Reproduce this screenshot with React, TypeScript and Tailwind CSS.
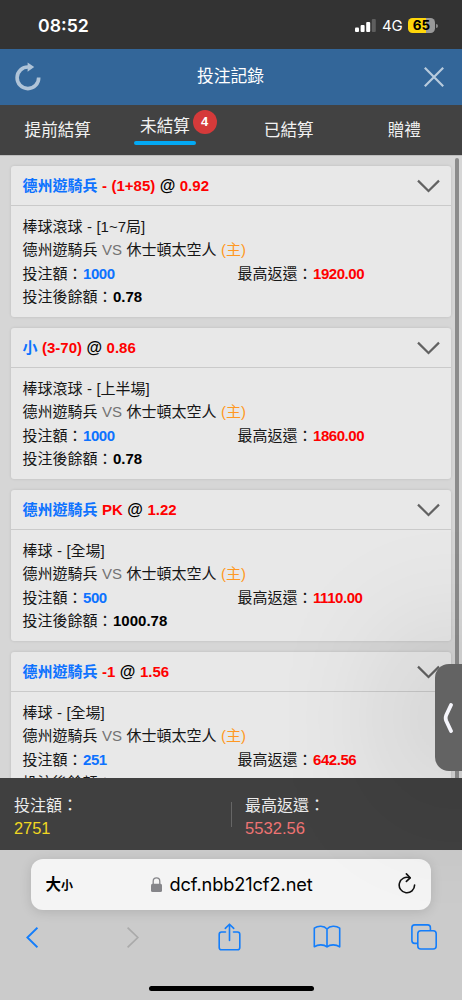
type Bet = {
  pick: string;
  line: string;
  odds: string;
  game: string;
  stake: string;
  payout: string;
  balance: string;
};

const bets: Bet[] = [
  { pick: "德州遊騎兵", line: "- (1+85)", odds: "0.92", game: "棒球滾球 - [1~7局]", stake: "1000", payout: "1920.00", balance: "0.78" },
  { pick: "小", line: "(3-70)", odds: "0.86", game: "棒球滾球 - [上半場]", stake: "1000", payout: "1860.00", balance: "0.78" },
  { pick: "德州遊騎兵", line: "PK", odds: "1.22", game: "棒球 - [全場]", stake: "500", payout: "1110.00", balance: "1000.78" },
  { pick: "德州遊騎兵", line: "-1", odds: "1.56", game: "棒球 - [全場]", stake: "251", payout: "642.56", balance: "1500.78" },
];

function StatusBar() {
  return (
    <div className="flex h-[49px] shrink-0 items-center justify-between bg-[#333333] pt-[2px] pr-[24px] pl-[38px] font-['Inter',sans-serif] text-white">
      <span className="text-[17.7px] leading-none font-semibold">08:52</span>
      <div className="flex items-center">
        <svg width="21" height="13" viewBox="0 0 21 13" fill="#fff">
          <rect x="0" y="8.5" width="4" height="4.5" rx="1" />
          <rect x="5.6" y="6" width="4" height="7" rx="1" />
          <rect x="11.2" y="3" width="4" height="10" rx="1" />
          <rect x="16.8" y="0" width="4" height="13" rx="1" fill="#5e5e5e" />
        </svg>
        <span className="ml-[6px] w-[20px] text-[15px] leading-none tracking-[-0.3px]">4G</span>
        <div className="ml-[6px] flex h-[15px] w-[27px] items-center justify-center rounded-[4.5px] bg-linear-to-r from-[#ffd60a] from-65% to-[#999999] to-65% text-[13.5px] leading-none font-bold text-black">
          65
        </div>
        <div className="ml-[1px] h-[4px] w-[2px] rounded-r-full bg-[#8a8a8a]" />
      </div>
    </div>
  );
}

function Header() {
  return (
    <header className="flex h-14 shrink-0 items-center justify-between bg-[#336699] pr-[18px] pl-[15px] text-white">
      <svg width="27" height="30" viewBox="0 0 27 30" fill="none">
        <path d="M23.7 15.5 A10.8 10.8 0 1 1 13.5 5" stroke="#b0c4d8" strokeWidth="3.6" />
        <path d="M12.6 .4 L19.2 5 L12.6 9.8Z" fill="#b0c4d8" />
      </svg>
      <h1 className="pr-[5px] text-[16.8px] leading-none">投注記錄</h1>
      <svg width="20" height="20" viewBox="0 0 20 20" fill="none" stroke="#b8cbdd" strokeWidth="2.2">
        <path d="M.8 .8 L19.2 19.2 M19.2 .8 L.8 19.2" />
      </svg>
    </header>
  );
}

function Tabs() {
  return (
    <nav className="grid h-[50px] shrink-0 grid-cols-4 bg-[#424242] text-center text-[16.6px] leading-[52px] text-[#f2f2f2]">
      <span>提前結算</span>
      <span className="relative pt-[10px] pl-[18.5px] text-left">
        <span className="flex h-[26px] w-[62px] items-start justify-center leading-[24px]">未結算</span>
        <span className="block h-[4px] w-[62px] rounded-full bg-[#03a9f4]" />
        <span className="absolute top-[5px] left-[77px] h-[24px] w-[24px] rounded-full bg-[#d53a3a] text-center text-[13px] leading-[24px] font-bold text-white">
          4
        </span>
      </span>
      <span>已結算</span>
      <span>贈禮</span>
    </nav>
  );
}

function BetCard({ bet }: { bet: Bet }) {
  return (
    <div className="h-[151px] w-[440px] shrink-0 rounded-[3px] bg-[#e8e8e8] text-[15px] [word-spacing:0.3px] shadow-[0_0_3px_rgba(0,0,0,0.12)]">
      <div className="flex h-[40px] items-center justify-between border-b border-[#cacaca] pr-[11px] pl-[11.5px] font-bold text-black">
        <div className="pt-[1px] leading-[22px]">
          <span className="text-[#0d72ff]">{bet.pick}</span>{" "}
          <span className="text-[#ff0000]">{bet.line}</span> <span className="text-[16px]">@</span>{" "}
          <span className="text-[#ff0000]">{bet.odds}</span>
        </div>
        <svg width="23" height="14" viewBox="0 0 23 14" fill="none" stroke="#626262" strokeWidth="2.2">
          <path d="M1 1.6 L11.5 12 L22 1.6" />
        </svg>
      </div>
      <div className="pt-[8.5px] pl-[11.5px] leading-[23.5px] text-[#161616]">
        <div>{bet.game}</div>
        <div>
          德州遊騎兵 <span className="text-[#737373]">VS</span> 休士頓太空人 <span className="text-[#ff9822]">(主)</span>
        </div>
        <div className="flex">
          <div className="w-[215px]">
            投注額：<b className="ml-[0.5px] tracking-[-0.45px] text-[#0d72ff]">{bet.stake}</b>
          </div>
          <div>
            最高返還：<b className="ml-[0.5px] tracking-[-0.45px] text-[#ff0000]">{bet.payout}</b>
          </div>
        </div>
        <div>
          投注後餘額：<b className="ml-[0.5px] text-black">{bet.balance}</b>
        </div>
      </div>
    </div>
  );
}

function Totals() {
  return (
    <div className="flex h-[72px] shrink-0 items-center bg-[#404040] pl-[14px] text-[16px] leading-[23px] text-[#ececec]">
      <div className="w-[217px] pt-[5px]">
        <div>投注額：</div>
        <div className="text-[16.4px] text-[#f0d722]">2751</div>
      </div>
      <div className="h-[25px] w-px bg-[#666666]" />
      <div className="pt-[5px] pl-[13px]">
        <div>最高返還：</div>
        <div className="text-[16.6px] text-[#ee7373]">5532.56</div>
      </div>
    </div>
  );
}

function BrowserBar() {
  return (
    <div className="flex h-[150px] shrink-0 flex-col items-center bg-[#cbcbcb]">
      <div className="mt-[9px] flex h-[51px] w-[400px] shrink-0 items-center rounded-[12px] bg-[#f4f4f4] pr-[15px] pl-[14.5px] text-black shadow-[0_2px_12px_rgba(0,0,0,0.13)]">
        <div className="flex w-[105px] items-baseline pt-[1px] font-bold">
          <span className="text-[15.5px]">大</span>
          <span className="text-[12px]">小</span>
        </div>
        <svg width="11" height="16" viewBox="0 0 11 16" fill="none">
          <path d="M2.2 7.5 V4.2 a3.3 3.3 0 0 1 6.6 0 V7.5" stroke="#858589" strokeWidth="1.3" />
          <rect x="0" y="6.8" width="11" height="8.2" rx="1.5" fill="#858589" />
        </svg>
        <span className="ml-[8px] font-['Inter',sans-serif] text-[18.2px] leading-none tracking-[-0.1px]">dcf.nbb21cf2.net</span>
        <svg className="mb-[2px] ml-auto" width="18" height="22" viewBox="0 0 18 22" fill="none" stroke="#111" strokeWidth="1.6" strokeLinecap="round" strokeLinejoin="round">
          <path d="M16.6 12 A7.7 7.7 0 1 1 11.8 4.9" />
          <path d="M8.4 .9 L12.2 4.8 L8.4 8.4" />
        </svg>
      </div>
      <div className="mt-[12px] flex h-[30px] w-full items-center justify-between pr-[25px] pl-[26px] text-[#147efb]">
        <svg width="12" height="21" viewBox="0 0 12 21" fill="none" stroke="currentColor" strokeWidth="1.9">
          <path d="M11.4 .7 L1.4 10.5 L11.4 20.3" />
        </svg>
        <svg className="ml-[6px]" width="12" height="21" viewBox="0 0 12 21" fill="none" stroke="#aaaaaa" strokeWidth="1.7">
          <path d="M.6 .7 L10.8 10.5 L.6 20.3" />
        </svg>
        <svg className="-ml-[5px]" width="23" height="28" viewBox="0 0 23 28" fill="none" stroke="currentColor" strokeWidth="1.6" strokeLinecap="round" strokeLinejoin="round">
          <path d="M7.5 9 H3.5 a2.3 2.3 0 0 0 -2.3 2.3 V24.5 a2.3 2.3 0 0 0 2.3 2.3 H19.5 a2.3 2.3 0 0 0 2.3 -2.3 V11.3 a2.3 2.3 0 0 0 -2.3 -2.3 H15.5" />
          <path d="M11.5 17.5 V1.4 M7.3 5.4 L11.5 1.2 L15.7 5.4" />
        </svg>
        <svg className="-ml-[11px]" width="28" height="24" viewBox="0 0 28 24" fill="none" stroke="currentColor" strokeWidth="1.6" strokeLinecap="round" strokeLinejoin="round">
          <path d="M14 4 C11 .5 5 .5 1.3 3.2 V21.8 C5 19.2 11 19.2 14 22 C17 19.2 23 19.2 26.7 21.8 V3.2 C23 .5 17 .5 14 4 V22" />
        </svg>
        <svg className="-ml-[13px]" width="26" height="26" viewBox="0 0 26 26" fill="none" stroke="currentColor" strokeWidth="1.6">
          <rect x="6.8" y="6.8" width="18.4" height="18.2" rx="3" />
          <path d="M6.8 19.4 H3.7 A2.8 2.8 0 0 1 .9 16.6 V3.7 A2.8 2.8 0 0 1 3.7 .9 H16.6 A2.8 2.8 0 0 1 19.4 3.7 V6.8" />
        </svg>
      </div>
      <div className="mt-[33.5px] h-[5.5px] w-[165px] rounded-full bg-black" />
    </div>
  );
}

export default function App() {
  return (
    <div className="relative flex h-[1000px] w-[462px] flex-col overflow-hidden font-['Liberation_Sans','Noto_Sans_CJK_TC',sans-serif]">
      <StatusBar />
      <Header />
      <Tabs />
      <main className="flex min-h-0 flex-1 justify-between overflow-hidden border-t border-[#bcbcbc] bg-[#d6d6d6] pr-[3px] pl-[11px]">
        <div className="flex flex-col gap-[11px] pt-[10px]">
          {bets.map((bet) => (
            <BetCard key={bet.balance + bet.payout} bet={bet} />
          ))}
        </div>
        <div className="mt-[2px] h-[640px] w-[4px] rounded-full bg-[#8b8b8b]" />
      </main>
      <Totals />
      <BrowserBar />

      {/* floating side handle */}
      <div className="absolute top-[664px] left-[435px] flex h-[107px] w-[44px] items-center rounded-[14px] bg-[#636363] pl-[8px] shadow-[0_0_140px_10px_rgba(0,0,0,0.3)]">
        <svg width="12" height="32" viewBox="0 0 12 32" fill="none" stroke="#f5f5fb" strokeWidth="3.8" strokeLinecap="round" strokeLinejoin="round">
          <path d="M8 3 L3.3 13 Q2 16 3.3 19 L8 29" />
        </svg>
      </div>
    </div>
  );
}
